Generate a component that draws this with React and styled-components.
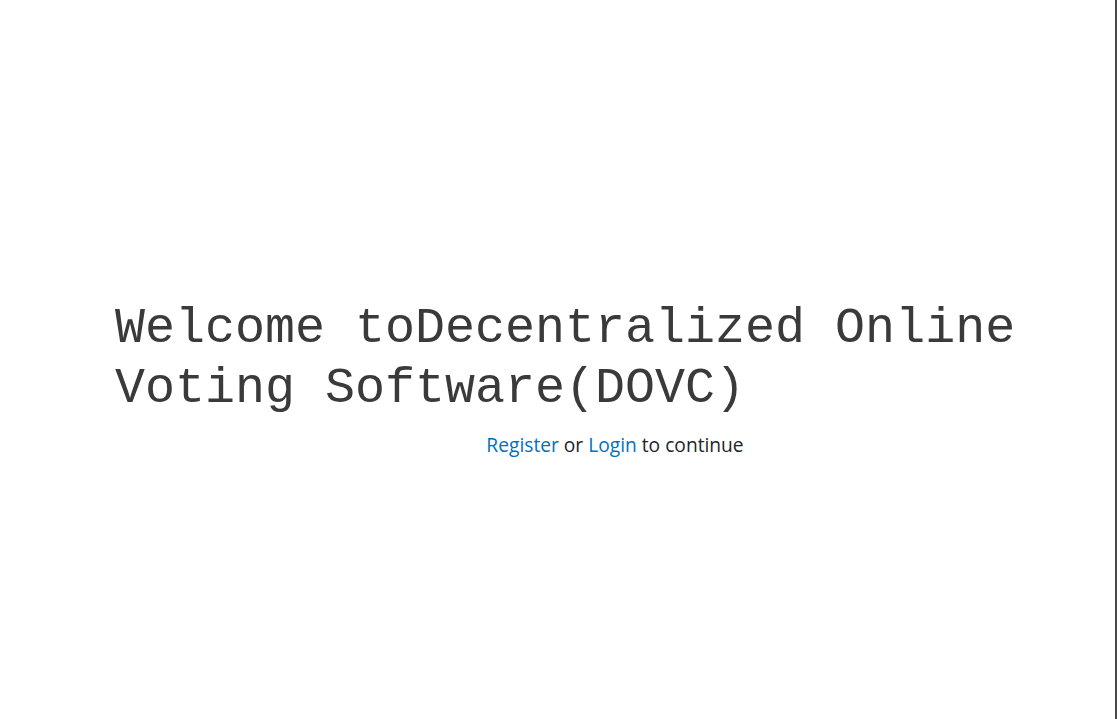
import React from 'react';
import styled, { createGlobalStyle } from 'styled-components';

const GlobalStyle = createGlobalStyle`
  html, body {
    margin: 0;
    padding: 0;
    background: #ffffff;
  }
  body {
    font-family: "Open Sans", "Noto Sans", sans-serif;
    color: #212529;
  }
`;

const Page = styled.div`
  box-sizing: border-box;
  width: 1117px;
  height: 719px;
  border-right: 2px solid #4a4a4a;
  overflow: hidden;
`;

const Main = styled.main`
  padding: 299px 0 0 115px;
`;

const Title = styled.h1`
  margin: 0;
  font-family: "Liberation Mono", "Courier New", monospace;
  font-weight: 400;
  font-size: 50px;
  line-height: 60px;
  color: #3a3a3a;
  max-width: 960px;
`;

const Lead = styled.p`
  margin: 12px 0 0;
  text-align: center;
  font-size: 19.2px;
  line-height: 27px;
  color: #212529;
`;

const Link = styled.a`
  color: #0071c1;
  text-decoration: none;
`;

export default function App() {
  return (
    <>
      <GlobalStyle />
      <Page>
        <Main>
          <Title>Welcome toDecentralized Online Voting Software(DOVC)</Title>
          <Lead>
            <Link href="#register">Register</Link> or <Link href="#login">Login</Link> to continue
          </Lead>
        </Main>
      </Page>
    </>
  );
}
